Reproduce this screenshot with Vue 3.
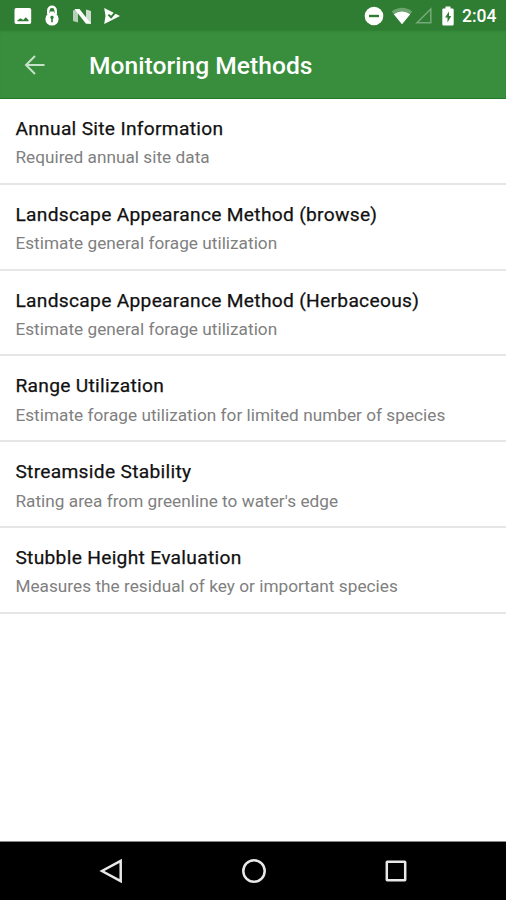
<script setup>
const methods = [
  { title: 'Annual Site Information', detail: 'Required annual site data' },
  { title: 'Landscape Appearance Method (browse)', detail: 'Estimate general forage utilization' },
  { title: 'Landscape Appearance Method (Herbaceous)', detail: 'Estimate general forage utilization' },
  { title: 'Range Utilization', detail: 'Estimate forage utilization for limited number of species' },
  { title: 'Streamside Stability', detail: "Rating area from greenline to water's edge" },
  { title: 'Stubble Height Evaluation', detail: 'Measures the residual of key or important species' },
]
</script>

<template>
  <div class="screen">
    <header class="status-bar">
      <div class="notifications">
        <svg class="icon-picture" width="18" height="18" viewBox="0 0 18 18">
          <path fill-rule="evenodd" d="M2.2 1h13.3a1.7 1.7 0 0 1 1.7 1.7v12.6a1.7 1.7 0 0 1-1.7 1.7H2.2a1.7 1.7 0 0 1-1.7-1.7V2.7A1.7 1.7 0 0 1 2.2 1zM3.500 14.300h11v-1.300l-2.700-2.800-2.600 2.800-2.700-1.800-3 2z" />
        </svg>
        <svg class="icon-lock" width="14" height="22" viewBox="0 0 14 22">
          <path d="M3.300 9V5.500a3.700 3.700 0 0 1 7.400 0V9" fill="none" stroke="#fff" stroke-width="2.500" />
          <circle cx="7" cy="14" r="6.600" />
          <path d="M5 6.500h4v2H5z" />
          <path d="M7 10.800a1.700 1.700 0 0 1 .8 3.200v3.200H6.200V14A1.700 1.700 0 0 1 7 10.800z" class="cut" />
        </svg>
        <svg class="icon-n" width="20" height="18" viewBox="0 0 20 18">
          <path d="M1 3.500 6 2v13.500L1 14z" opacity=".65" />
          <path d="M14 2.500 19 4v13l-5-1.500z" opacity=".75" />
          <path d="M2.500 2H7.500l11.500 14.800h-5z" />
        </svg>
        <svg class="icon-play" width="18" height="18" viewBox="0 0 18 18">
          <path d="M1.200 1 17 9 1.200 17 2.500 9z" />
          <path d="m5.400 7.600 2.700 2.600 5.200-5.800" fill="none" class="cut-line" />
        </svg>
      </div>
      <div class="system">
        <svg class="icon-dnd" width="20" height="20" viewBox="0 0 20 20">
          <circle cx="10" cy="10" r="9.300" />
          <path d="M5 8.800h10v2.400H5z" class="cut" />
        </svg>
        <svg class="icon-wifi" width="22" height="18" viewBox="0 0 22 18">
          <path d="M.7 4.500Q11-3 21.300 4.500L11 17.300z" opacity=".3" />
          <path d="M2.800 7.200Q11 2 19.200 7.200L11 17.300z" />
        </svg>
        <svg class="icon-signal" width="18" height="18" viewBox="0 0 18 18">
          <path d="M2 15.800 15.800 2v13.800z" fill="none" stroke="#fff" stroke-width="1.500" opacity=".35" />
        </svg>
        <svg class="icon-battery" width="14" height="20" viewBox="0 0 14 20">
          <path d="M4.500 .5h5v2h2a1.200 1.200 0 0 1 1.200 1.200v14.600a1.200 1.200 0 0 1-1.200 1.200h-9a1.200 1.200 0 0 1-1.200-1.200V3.700a1.200 1.200 0 0 1 1.200-1.200h2z" />
          <path d="M8 5.500 4 11.500h2.500v5l3.700-6.400H8z" class="cut" />
        </svg>
        <time class="clock">2:04</time>
      </div>
    </header>

    <nav class="app-bar">
      <svg class="back" width="22" height="22" viewBox="0 0 22 22">
        <path d="M20.500 11H2M11 2 2 11l9 9" />
      </svg>
      <h1>Monitoring Methods</h1>
    </nav>

    <ul class="methods">
      <li v-for="method in methods" :key="method.title">
        <h2>{{ method.title }}</h2>
        <p>{{ method.detail }}</p>
      </li>
    </ul>

    <footer class="navigation">
      <svg width="26" height="26" viewBox="0 0 26 26"><path d="M22.700 2.800v20.400L4 13z" /></svg>
      <svg width="26" height="26" viewBox="0 0 26 26"><circle cx="13" cy="13" r="10.700" /></svg>
      <svg width="26" height="26" viewBox="0 0 26 26"><rect x="3.800" y="3.800" width="18.400" height="18.400" rx=".5" /></svg>
    </footer>
  </div>
</template>

<style>
body {
  margin: 0;
}
</style>

<style scoped>
.screen {
  display: flex;
  flex-direction: column;
  width: 506px;
  height: 900px;
  overflow: hidden;
  background: #fff;
  font-family: Roboto, sans-serif;
}

h1,
h2,
p,
ul {
  margin: 0;
  padding: 0;
  font-weight: 400;
}

svg {
  display: block;
  flex: none;
}

.status-bar {
  flex: none;
  display: flex;
  justify-content: space-between;
  box-sizing: border-box;
  height: 30px;
  padding: 0 9px 0 14px;
  background: #2e7d32;
  color: #fff;
}

.notifications,
.system {
  display: flex;
  align-items: center;
  height: 31px;
  fill: #fff;
}

.icon-lock {
  margin-left: 13px;
}

.icon-n {
  margin-left: 13px;
}

.icon-play {
  margin-left: 11px;
}

.icon-wifi {
  margin-left: 7px;
}

.icon-signal {
  margin-left: 2px;
}

.icon-battery {
  margin-left: 8px;
}

.cut {
  fill: #2e7d32;
}

.cut-line {
  stroke: #2e7d32;
  stroke-width: 2;
}

.clock {
  width: 35px;
  margin-left: 7px;
  padding-top: 1px;
  font-size: 17.500px;
  font-weight: 500;
  line-height: 31px;
  white-space: nowrap;
}

.app-bar {
  flex: none;
  display: flex;
  align-items: center;
  box-sizing: border-box;
  height: 69px;
  padding: 1px 24px 0;
  border-bottom: 1px solid #1f7a25;
  background: #388e3c;
  box-shadow: inset 0 2px 2px -1px #2e7d32;
}

.back {
  fill: none;
  stroke: #c6e1c7;
  stroke-width: 2;
}

.app-bar h1 {
  margin-left: 43px;
  padding-top: 2px;
  color: #fff;
  font-size: 24.600px;
  font-weight: 500;
  line-height: 34px;
  letter-spacing: .03px;
  white-space: nowrap;
}

.methods {
  flex: 1;
  list-style: none;
}

.methods li {
  box-sizing: border-box;
  height: 85.800px;
  padding: 16px 15.400px 0;
  border-bottom: 2px solid #e6e6e6;
  white-space: nowrap;
}

.methods h2 {
  color: #111;
  font-size: 19.200px;
  line-height: 27px;
  letter-spacing: .3px;
  -webkit-text-stroke: .25px #111;
}

.methods p {
  margin-top: 3.400px;
  color: #808080;
  font-size: 17.200px;
  line-height: 24px;
  letter-spacing: .03px;
}

.navigation {
  flex: none;
  display: flex;
  justify-content: space-between;
  align-items: center;
  box-sizing: border-box;
  height: 59px;
  padding: 0 97px 0 98px;
  border-top: 1px solid #888;
  background: #000;
  fill: none;
  stroke: #e8e8e8;
  stroke-width: 2.500;
}
</style>
